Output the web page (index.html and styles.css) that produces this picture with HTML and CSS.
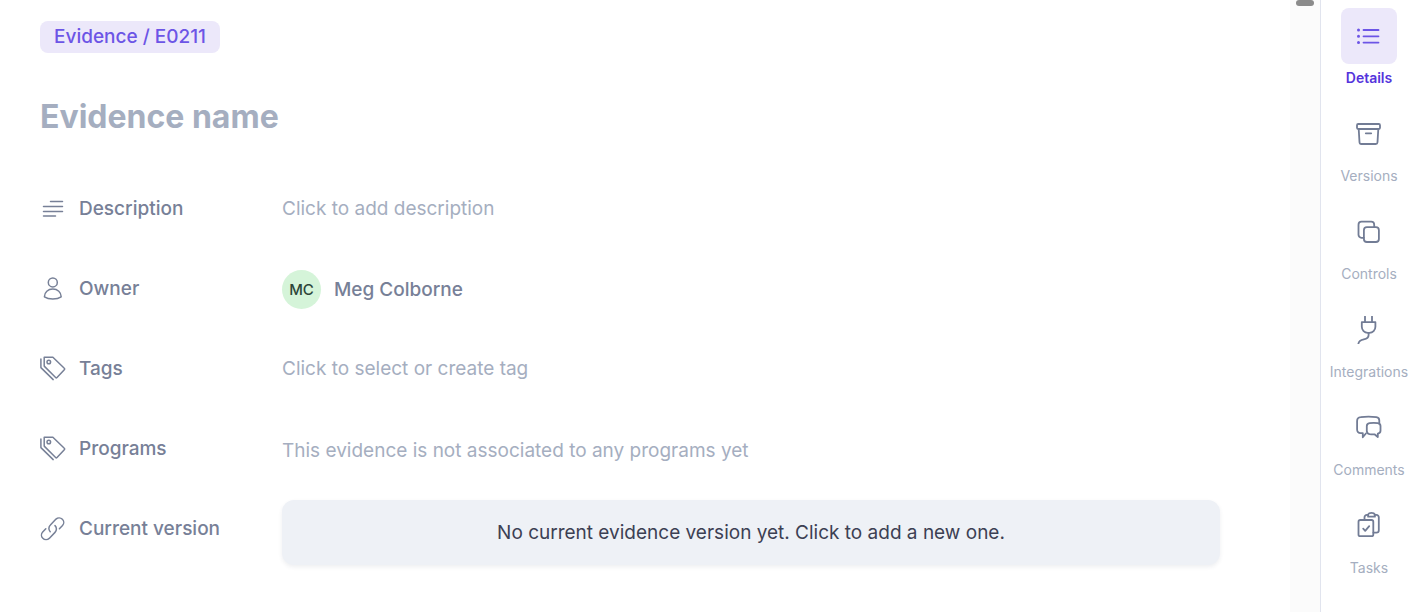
FILE: index.html
```html
<!DOCTYPE html>
<html lang="en">
  <head>
    <meta charset="utf-8" />
    <title>Evidence / E0211</title>
    <link rel="stylesheet" href="styles.css" />
  </head>
  <body>
    <!-- shared tag icon -->
    <svg class="sprite" aria-hidden="true">
      <symbol id="icon-tags" viewBox="0 0 26 26">
        <path d="M4.2 2.300h8.700L24.300 13.200a1 1 0 0 1 0 1.500L17 22.500a1 1 0 0 1-1.400 0L4.200 11.100z" />
        <circle cx="8.800" cy="7" r="1.800" />
        <path d="M.9 4v8.600l12.300 12" />
      </symbol>
    </svg>

    <div class="page">
      <main class="content">
        <a class="breadcrumb" href="#">Evidence / E0211</a>
        <input class="title" type="text" placeholder="Evidence name" aria-label="Evidence name" />

        <div class="fields">
          <div class="field">
            <label class="field-label" for="description">
              <svg class="icon" viewBox="0 0 26 26">
                <path d="M10.500 6.500h12M3.500 11.500h19M3.500 16.500h19M3.500 21h12" />
              </svg>
              Description
            </label>
            <input class="field-input" id="description" type="text" placeholder="Click to add description" />
          </div>

          <div class="field">
            <span class="field-label">
              <svg class="icon" viewBox="0 0 26 26">
                <circle cx="12.800" cy="7.400" r="4.500" />
                <path d="M4.400 21.800c0-4.600 3.600-7.700 8.400-7.700s8.400 3.100 8.400 7.700c-2.100 1.400-5 2.100-8.400 2.100s-6.300-.7-8.400-2.100z" />
              </svg>
              Owner
            </span>
            <button class="owner" type="button">
              <span class="avatar">MC</span>
              Meg Colborne
            </button>
          </div>

          <div class="field">
            <label class="field-label" for="tags">
              <svg class="icon"><use href="#icon-tags" /></svg>
              Tags
            </label>
            <input class="field-input" id="tags" type="text" placeholder="Click to select or create tag" />
          </div>

          <div class="field">
            <span class="field-label">
              <svg class="icon"><use href="#icon-tags" /></svg>
              Programs
            </span>
            <span class="field-empty">This evidence is not associated to any programs yet</span>
          </div>

          <div class="field">
            <span class="field-label">
              <svg class="icon" viewBox="0 0 26 26">
                <path d="M10.200 16.800a4.800 4.800 0 0 1 .2-6.800l5.600-5.900a4.600 4.600 0 0 1 6.500 6.500l-3.100 3.200" />
                <path d="M15 10.600a4.800 4.800 0 0 1 0 6.800l-5.800 6a4.600 4.600 0 0 1-6.500-6.500l3.100-3.200" />
              </svg>
              Current version
            </span>
            <button class="version" type="button">No current evidence version yet. Click to add a new one.</button>
          </div>
        </div>
      </main>

      <div class="scrollbar"><div class="scrollbar-thumb"></div></div>

      <nav class="sidebar">
        <button class="nav-item active" type="button">
          <span class="nav-icon">
            <svg viewBox="0 0 28 28">
              <path d="M8.500 8h15M8.500 14.300h15M8.500 20.600h15" />
              <path class="dots" d="M3.500 8h.01M3.500 14.300h.01M3.500 20.600h.01" />
            </svg>
          </span>
          Details
        </button>
        <button class="nav-item" type="button">
          <span class="nav-icon">
            <svg viewBox="0 0 28 28">
              <rect x="2" y="4" width="23" height="5" rx="1.200" />
              <path d="M3.700 9l.8 13.300a1.800 1.800 0 0 0 1.800 1.700h14.400a1.800 1.800 0 0 0 1.800-1.700L23.300 9M10.800 13.300h5.400" />
            </svg>
          </span>
          Versions
        </button>
        <button class="nav-item" type="button">
          <span class="nav-icon">
            <svg viewBox="0 0 28 28">
              <rect x="8.900" y="9.200" width="15" height="14.800" rx="3" />
              <path d="M8.900 19.800H6.500a3 3 0 0 1-3-3V6.700a3 3 0 0 1 3-3h9.700a3 3 0 0 1 3 3v2.500" />
            </svg>
          </span>
          Controls
        </button>
        <button class="nav-item" type="button">
          <span class="nav-icon">
            <svg viewBox="0 0 28 28">
              <path d="M10 .5v5.600M17 .5v5.600M6.800 6.200h13.600v4.600a6 6 0 0 1-6 6h-1.600a6 6 0 0 1-6-6z" />
              <path d="M13.600 16.800v2.200c0 6.800-9 2-10.200 8.600" />
            </svg>
          </span>
          Integrations
        </button>
        <button class="nav-item" type="button">
          <span class="nav-icon">
            <svg viewBox="0 0 28 28">
              <path d="M10.900 19.500L7.800 23.300v-4.200H5.700c-2.400 0-3.600-1.500-3.600-3.600V7c0-2.600 1.400-3.600 3.600-3.800 5-.8 10.500-.8 15.600 0 2 .3 3 1.500 3 3.300v2.900" />
              <path d="M14.500 9.200c2.700-.5 5.600-.5 8.300 0 1.800.3 2.700 1.300 2.700 2.900v4.700c0 1.600-.9 2.600-2.700 2.900V23l-3.300-2.700c-2 .1-3.500 0-5-.2-1.800-.3-2.700-1.300-2.700-3v-5c0-1.600.9-2.600 2.700-2.900z" />
            </svg>
          </span>
          Comments
        </button>
        <button class="nav-item" type="button">
          <span class="nav-icon">
            <svg viewBox="0 0 28 28">
              <rect x="3.500" y="8" width="14.800" height="16.200" rx="1.800" />
              <path d="M9.500 7.800V5.300a2.400 2.400 0 0 1 2.400-2.400h1.300M19.500 2.900h1.900a2.400 2.400 0 0 1 2.400 2.400v12.900a2.400 2.400 0 0 1-2.400 2.400h-3" />
              <path d="M13.100 2.400c1-2 5.800-2 6.800 0v2.300h-6.800zM8.200 16.600l2 2.200 4-4.600" />
            </svg>
          </span>
          Tasks
        </button>
      </nav>
    </div>
  </body>
</html>
```

FILE: styles.css
```css
* {
  box-sizing: border-box;
}
body {
  margin: 0;
  font-family: Inter, "Liberation Sans", sans-serif;
  font-size: 19px;
  background: #fff;
  color: #778097;
}
button,
input {
  font: inherit;
  color: inherit;
  padding: 0;
  border: none;
  background: none;
}
button {
  cursor: pointer;
}
svg {
  fill: none;
  stroke: currentColor;
  stroke-linecap: round;
  stroke-linejoin: round;
}
.sprite {
  display: none;
}
.page {
  display: flex;
  min-height: 100vh;
}
.content {
  flex: 1;
  display: flex;
  flex-direction: column;
  align-items: flex-start;
  padding: 21px 70px 0 40px;
}
.breadcrumb {
  padding: 0 14px;
  line-height: 32px;
  border-radius: 8px;
  background: #ece8fa;
  color: #6c55e6;
  font-weight: 500;
  text-decoration: none;
}
.title {
  width: 100%;
  height: 48px;
  margin: 39px 0 28px;
  font-size: 32px;
  font-weight: 700;
}
.title::placeholder,
.field-input::placeholder {
  color: #a5aec0;
  opacity: 1;
}
/* field rows */
.fields {
  width: 100%;
}
.field {
  display: grid;
  grid-template-columns: 242px 1fr;
  align-items: center;
  height: 80px;
}
.field-label {
  display: flex;
  align-items: center;
  gap: 13px;
  font-weight: 500;
}
.icon {
  width: 26px;
  height: 26px;
  stroke-width: 1.5;
}
.field-input {
  width: 100%;
}
.field-empty {
  margin-top: 4px;
  color: #a5aec0;
}
.owner {
  display: flex;
  align-items: center;
  gap: 13px;
  margin-top: 2px;
  font-weight: 500;
}
.avatar {
  width: 39px;
  height: 39px;
  border-radius: 50%;
  background: #d5f4d9;
  color: #2c4638;
  font-size: 15px;
  line-height: 39px;
}
.version {
  height: 65px;
  margin-top: 8px;
  border-radius: 12px;
  background: #eef1f6;
  color: #3c4053;
  box-shadow: 0 2px 4px rgba(40, 50, 80, 0.08);
}
.scrollbar {
  width: 30px;
  background: #fbfbfb;
}
.scrollbar-thumb {
  width: 18px;
  height: 6px;
  margin: 0 auto;
  border-radius: 4px;
  background: #8b8b8b;
}
/* right navigation */
.sidebar {
  width: 95px;
  padding: 8px 0 0 2px;
  border-left: 1px solid #e1e4ee;
  display: flex;
  flex-direction: column;
  align-items: center;
  gap: 17px;
}
.nav-item {
  display: flex;
  flex-direction: column;
  align-items: center;
  gap: 3px;
  font-size: 14px;
  line-height: 22px;
  color: #a5aec0;
}
.nav-icon {
  display: flex;
  align-items: center;
  justify-content: center;
  width: 56px;
  height: 56px;
  border-radius: 8px;
  color: #727c95;
}
.nav-icon svg {
  width: 28px;
  height: 28px;
  stroke-width: 1.8;
}
.nav-item.active {
  color: #5434dc;
  font-weight: 600;
}
.active .nav-icon {
  background: #ece8fa;
  color: #6c55e6;
}
.dots {
  stroke-width: 3;
}
```
